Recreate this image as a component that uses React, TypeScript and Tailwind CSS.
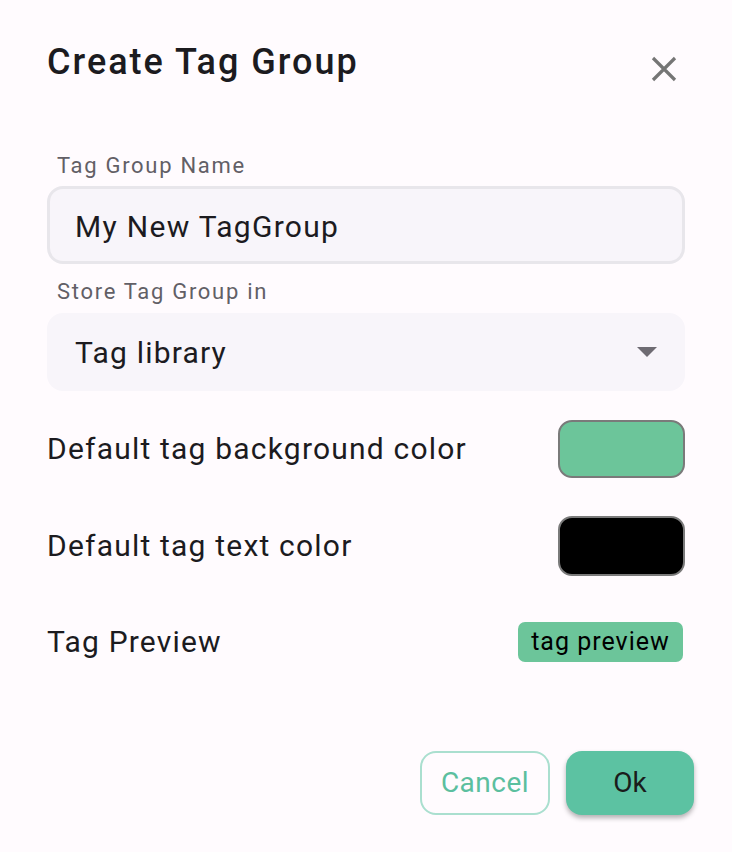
import React from "react";

const font = { fontFamily: "Roboto, 'Noto Sans', sans-serif" };

function CloseIcon() {
  return (
    <svg width="28" height="28" viewBox="0 0 28 28" fill="none">
      <path d="M3 3 L25 25 M25 3 L3 25" stroke="#757575" strokeWidth="3.2" strokeLinecap="butt" />
    </svg>
  );
}

export default function App() {
  return (
    <div className="w-[732px] h-[852px] bg-[#fffbfe] text-[#1c1b1f] overflow-hidden" style={font}>
      <div className="flex flex-col pl-[47px] pr-[47px] pt-[38px]">
        <div className="flex items-start justify-between">
          <h1 className="text-[36px] leading-[48px] font-medium tracking-[2px]">Create Tag Group</h1>
          <div className="pt-[17px] pr-[7px]">
            <CloseIcon />
          </div>
        </div>

        <label className="mt-[65px] ml-[10px] text-[22px] leading-[29px] tracking-[1.7px] text-[#625f66]">
          Tag Group Name
        </label>
        <div className="mt-[6px] h-[78px] rounded-[16px] border-[3px] border-[#e8e6eb] bg-[#f8f5fa] flex items-center pl-[25px]">
          <span className="text-[30px] leading-[36px] tracking-[1.3px] pt-[3px]">My New TagGroup</span>
        </div>

        <label className="mt-[13px] ml-[10px] text-[22px] leading-[29px] tracking-[1.7px] text-[#625f66]">
          Store Tag Group in
        </label>
        <div className="mt-[7px] h-[78px] rounded-[16px] bg-[#f8f5fa] flex items-center justify-between pl-[28px] pr-[28px]">
          <span className="text-[30px] leading-[36px] tracking-[1.2px] pt-[2px]">Tag library</span>
          <svg width="20" height="10" viewBox="0 0 20 10">
            <path d="M0 0 L20 0 L10 10 Z" fill="#6e6b72" />
          </svg>
        </div>

        <div className="mt-[29px] flex items-center justify-between h-[58px]">
          <span className="text-[30px] leading-[36px] tracking-[1.2px]">Default tag background color</span>
          <div className="w-[127px] h-[58px] rounded-[14px] border-2 border-[#7a7a7a] bg-[#6cc59a]" />
        </div>

        <div className="mt-[38px] flex items-center justify-between h-[60px]">
          <span className="text-[30px] leading-[36px] tracking-[1.2px]">Default tag text color</span>
          <div className="w-[127px] h-[60px] rounded-[14px] border-2 border-[#7a7a7a] bg-black" />
        </div>

        <div className="mt-[46px] flex items-center justify-between h-[40px]">
          <span className="text-[30px] leading-[36px] tracking-[1.2px]">Tag Preview</span>
          <div className="mr-[2px] h-[40px] w-[165px] rounded-[7px] bg-[#6cc59a] flex items-center justify-center text-[25px] leading-[30px] tracking-[1px] text-black">
            tag preview
          </div>
        </div>

        <div className="mt-[89px] mr-[-9px] flex justify-end gap-[16px]">
          <button className="w-[130px] h-[64px] rounded-[16px] border-2 border-[#aadfcf] bg-transparent text-[28px] tracking-[0.5px] text-[#5bbf9f]">
            Cancel
          </button>
          <button className="w-[128px] h-[64px] rounded-[16px] bg-[#5cc2a2] text-[28px] text-[#1a1c1b] shadow-[0_3px_5px_rgba(0,0,0,0.3)]">
            Ok
          </button>
        </div>
      </div>
    </div>
  );
}
